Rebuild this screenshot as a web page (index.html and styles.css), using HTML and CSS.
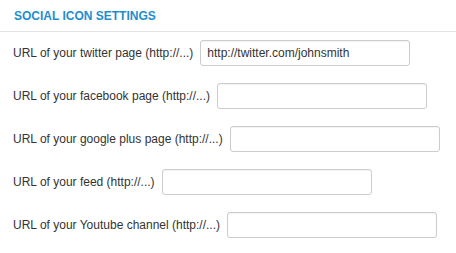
FILE: index.html
```html
<!DOCTYPE html>
<html>
<head>
	<title>Social icon settings</title>
	<link rel="stylesheet" href="styles.css">
</head>
<body>
	<div class="panel">
		<h3 class="panel-title">SOCIAL ICON SETTINGS</h3>
		<div class="panel-body">
			<div class="field">
				<label>URL of your twitter page (http://...)</label>
				<input type="text" value="http://twitter.com/johnsmith">
			</div>
			<div class="field">
				<label>URL of your facebook page (http://...)</label>
				<input type="text">
			</div>
			<div class="field">
				<label>URL of your google plus page (http://...)</label>
				<input type="text">
			</div>
			<div class="field">
				<label>URL of your feed (http://...)</label>
				<input type="text">
			</div>
			<div class="field">
				<label>URL of your Youtube channel (http://...)</label>
				<input type="text">
			</div>
		</div>
	</div>
</body>
</html>
```

FILE: styles.css
```css
body{
	margin: 0;
	background-color: #fff;
	font-family: "Liberation Sans", Arial, sans-serif;
	color: #333;
}
.panel-title{
	margin: 0;
	padding: 9px 14px 0;
	height: 22px;
	font-size: 12px;
	font-weight: bold;
	color: #1e8ecf;
	border-bottom: 1px solid #e3e3e3;
}
.panel-body{
	padding: 8px 13px;
}
.field{
	display: flex;
	align-items: center;
	gap: 7px;
	margin-bottom: 17px;
}
.field label{
	font-size: 12px;
}
.field input{
	box-sizing: border-box;
	width: 210px;
	height: 26px;
	padding: 0 6px;
	border: 1px solid #ccc;
	border-radius: 3px;
	box-shadow: inset 0 1px 1px rgba(0,0,0,0.05);
	font-family: "Liberation Sans", Arial, sans-serif;
	font-size: 12px;
	color: #333;
}
```
